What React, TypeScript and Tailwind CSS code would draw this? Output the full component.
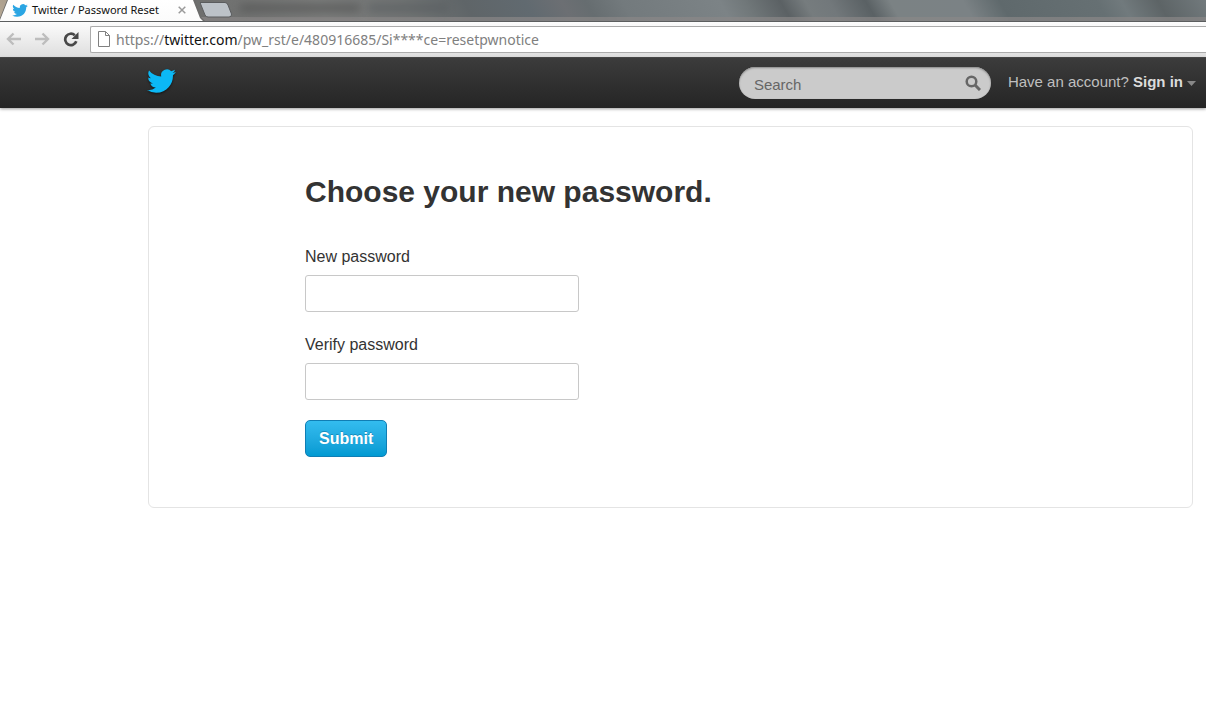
import React from "react";

function Bird({ className }: { className: string }) {
  return (
    <svg viewBox="0 2 24 20" className={className} fill="currentColor" aria-hidden="true">
      <path d="M23.953 4.57a10 10 0 01-2.825.775 4.958 4.958 0 002.163-2.723c-.951.555-2.005.959-3.127 1.184a4.92 4.92 0 00-8.384 4.482C7.69 8.095 4.067 6.13 1.64 3.162a4.822 4.822 0 00-.666 2.475c0 1.71.87 3.213 2.188 4.096a4.904 4.904 0 01-2.228-.616v.06a4.923 4.923 0 003.946 4.827 4.996 4.996 0 01-2.212.085 4.936 4.936 0 004.604 3.417 9.867 9.867 0 01-6.102 2.105c-.39 0-.779-.023-1.17-.067a13.995 13.995 0 007.557 2.209c9.053 0 13.998-7.496 13.998-13.985 0-.21 0-.42-.015-.63A9.935 9.935 0 0024 4.59z" />
    </svg>
  );
}

function TabStrip() {
  return (
    <div className="relative flex h-[22px] overflow-hidden border-b border-[#5c5e5f] bg-[linear-gradient(60deg,#b5a793_0%,#6e6e6e_10%,#6e6f6e_18%,#7b7c7b_27%,#707373_34%,#5f6568_39%,#616a70_44%,#6c6f73_47%,#666d70_49%,#737a7d_52%,#7c8386_60%,#71787a_62%,#5b6164_65%,#767c7e_67%,#72787b_69%,#5a6164_72%,#7b8284_74%,#7b8285_80%,#5f696c_83%,#667073_91%,#717a7d_93%,#5d6466_96%,#727a7d_100%)]">
      <div className="absolute inset-x-0 bottom-0 h-1 bg-[#8a8787]/70" />
      <div className="absolute top-1 left-60 h-2 w-30 bg-[#4c4d4d] opacity-60 blur-[4px]" />
      <div className="absolute top-1 left-92 h-2 w-20 bg-[#565b5e] opacity-60 blur-[4px]" />
      <div className="relative h-[22px] w-[206px] shrink-0 bg-[#6c6c6b] [clip-path:polygon(7px_0,195px_0,201px_17px,206px_22px,0_22px,0_18px)]">
        <div className="box-content flex h-5 items-center bg-gradient-to-b from-white to-[#fbfbfb] pr-5 pb-0.5 pl-3 [clip-path:polygon(8px_0,193px_0,200px_18px,204px_22px,0_22px,0_20px)]">
          <Bird className="mr-1 h-[13px] w-4 shrink-0 text-[#2aa5e3]" />
          <span className="text-[11px] leading-5 whitespace-nowrap text-[#111]">Twitter / Password Reset</span>
          <button aria-label="Close tab" className="ml-auto flex size-2 shrink-0 items-center justify-center text-[#9a9a9a]">
            <svg viewBox="0 0 8 8" className="size-2" stroke="currentColor" strokeWidth="1.5" aria-hidden="true">
              <path d="M.7.7l6.6 6.6M7.3.7L.7 7.3" />
            </svg>
          </button>
        </div>
      </div>
      <button aria-label="New tab" className="relative -ml-1.5 h-[18px] w-8">
        <svg viewBox="0 0 32 18" className="h-[18px] w-8" aria-hidden="true">
          <path d="M0 2.5H25Q27 2.5 28 5L31.5 14Q32 17 29 17H8Q6 17 5 15Z" fill="#bcc2c8" stroke="#5a5c5e" />
        </svg>
      </button>
    </div>
  );
}

function Toolbar() {
  return (
    <div className="flex h-9 items-center border-b border-[#4a4a4a] bg-gradient-to-b from-[#fcfcfc] to-[#dedede] pb-px pl-1.5">
      <button aria-label="Back" className="text-[#bdbdbd]">
        <svg viewBox="0 0 16 14" className="h-3.5 w-4" fill="none" stroke="currentColor" strokeWidth="2.4" aria-hidden="true">
          <path d="M15 7H2M7.5 1.5L2 7l5.5 5.5" />
        </svg>
      </button>
      <button aria-label="Forward" className="ml-3 text-[#bdbdbd]">
        <svg viewBox="0 0 16 14" className="h-3.5 w-4" fill="none" stroke="currentColor" strokeWidth="2.4" aria-hidden="true">
          <path d="M1 7H14M8.500 1.500L14 7l-5.500 5.500" />
        </svg>
      </button>
      <button aria-label="Reload" className="ml-3 text-[#484848]">
        <svg viewBox="0 0 18 16" className="h-4 w-[18px]" fill="none" stroke="currentColor" aria-hidden="true">
          <path d="M14.300 10.300A5.700 5.700 0 1 1 12.800 4.200" strokeWidth="2.700" />
          <path d="M16.500 1V8H9.500Z" fill="currentColor" stroke="none" />
        </svg>
      </button>
      <div className="ml-2.5 flex h-[27px] min-w-0 flex-1 items-center rounded-l-xs border border-r-0 border-[#ababab] bg-white pl-[7px]">
        <svg viewBox="0 0 12 16" className="mr-1.5 h-4 w-3 shrink-0" fill="#fff" stroke="#808080" aria-hidden="true">
          <path d="M.5.500H7.500L11.500 4.500V15.500H.5ZM7.500.500V4.500H11.500" />
        </svg>
        <span className="truncate pt-0.5 text-sm leading-6 text-[#808080]">
          https://<span className="text-[#111]">twitter.com</span>/pw_rst/e/480916685/Si****ce=resetpwnotice
        </span>
      </div>
    </div>
  );
}

function SiteHeader() {
  return (
    <header className="flex h-[50px] items-center bg-gradient-to-b from-[#3c3c3c] to-[#252525] pr-2.5 pl-[147px] font-['Liberation_Sans',Arial,sans-serif] shadow-[0_1px_3px_rgba(0,0,0,0.4)]">
      <a href="#home" aria-label="Twitter" className="-mt-1 text-[#0cb8f5]">
        <Bird className="h-6 w-[29px] drop-shadow-[0_1px_1px_rgba(0,0,0,0.6)]" />
      </a>
      <form role="search" className="ml-auto flex h-8 w-[252px] items-center rounded-full bg-[#cbcbcb] pr-2.5 pl-[15px] shadow-[inset_0_1px_2px_#888]" onSubmit={(e) => e.preventDefault()}>
        <input
          type="search"
          aria-label="Search"
          placeholder="Search"
          className="mt-1 min-w-0 flex-1 bg-transparent text-[15px] leading-5 text-[#444] outline-none placeholder:text-[#666]"
        />
        <button aria-label="Submit search" className="text-[#666]">
          <svg viewBox="0 0 16 16" className="size-4" fill="none" stroke="currentColor" strokeWidth="2.500" aria-hidden="true">
            <circle cx="6.500" cy="6.500" r="4.800" />
            <path d="M10 10l5 5" strokeWidth="3" />
          </svg>
        </button>
      </form>
      <a href="#signin" className="ml-[17px] flex items-center pb-0.5 text-[15px] leading-5 whitespace-nowrap text-[#bfbfbf]">
        <span>
          Have an account? <b className="text-[#dcdcdc]">Sign in</b>
        </span>
        <svg viewBox="0 0 9 5" className="mt-0.5 ml-1 h-[5px] w-[9px]" fill="#888" aria-hidden="true">
          <path d="M0 0H9L4.500 5Z" />
        </svg>
      </a>
    </header>
  );
}

function PasswordField({ id, label }: { id: string; label: string }) {
  return (
    <div className="mb-5 flex flex-col items-start">
      <label htmlFor={id} className="mb-[5px] text-base leading-[26px]">
        {label}
      </label>
      <input id={id} type="password" className="h-[37px] w-full max-w-[274px] rounded-[3px] border border-[#c8c8c8] bg-white px-2 text-base" />
    </div>
  );
}

export default function App() {
  return (
    <div className="min-h-screen bg-white font-['Noto_Sans','Open_Sans',sans-serif]">
      <TabStrip />
      <Toolbar />
      <SiteHeader />
      <main className="pt-[18px] pr-[13px] pl-[148px] font-['Liberation_Sans',Arial,sans-serif] text-[#333]">
        <section className="rounded-md border border-[#e4e4e4] pt-[45px] pr-6 pb-[50px] pl-[156px]">
          <h1 className="mb-8 text-3xl leading-10 font-bold">Choose your new password.</h1>
          <form onSubmit={(e) => e.preventDefault()}>
            <PasswordField id="new-password" label="New password" />
            <PasswordField id="verify-password" label="Verify password" />
            <button
              type="submit"
              className="block h-[37px] rounded-[5px] border border-[#107eb4] bg-gradient-to-b from-[#33bcef] to-[#019ad2] px-[13px] text-base leading-6 font-bold text-white [text-shadow:0_-1px_0_rgba(0,80,120,0.4)]"
            >
              Submit
            </button>
          </form>
        </section>
      </main>
    </div>
  );
}
